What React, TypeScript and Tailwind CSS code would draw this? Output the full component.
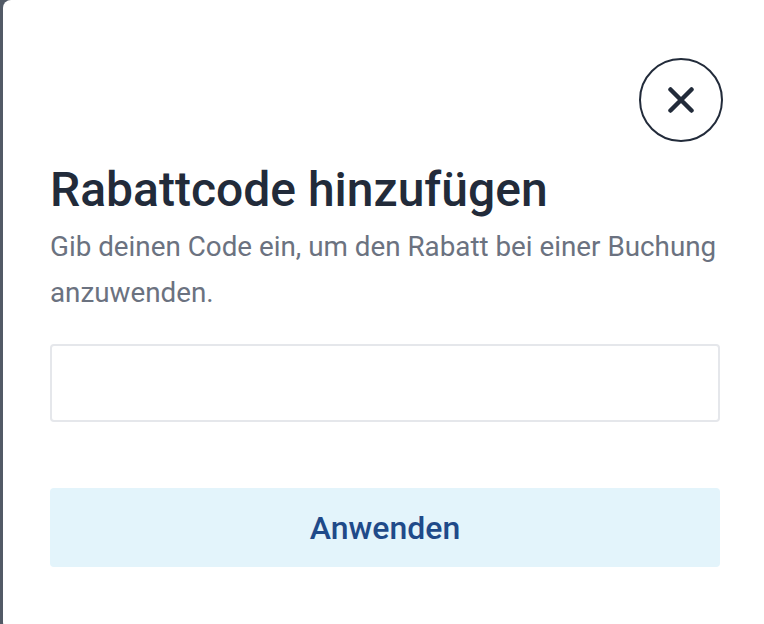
export default function App() {
  return (
    <div
      className="flex h-screen overflow-hidden bg-[#525a66]"
      style={{ fontFamily: "Roboto, 'Noto Sans', sans-serif" }}
    >
      <div className="ml-[3px] flex h-[630px] w-[780px] shrink-0 flex-col rounded-lg bg-white pl-[47px] pr-[63px] pt-[58px]">
        <div className="-mr-[3px] flex justify-end">
          <button
            type="button"
            aria-label="Schließen"
            className="flex h-[84px] w-[84px] items-center justify-center rounded-full border-2 border-[#222b3a] text-[#222b3a]"
          >
            <svg width="26" height="26" viewBox="0 0 26 26" fill="none">
              <path
                d="M2.5 2.5L23.5 23.5M23.5 2.5L2.5 23.5"
                stroke="currentColor"
                strokeWidth="4.5"
                strokeLinecap="round"
              />
            </svg>
          </button>
        </div>
        <h2 className="mt-[22px] text-[48px] font-medium leading-[52px] text-[#222b3a]">
          Rabattcode hinzufügen
        </h2>
        <p className="mt-[8px] -mr-[4px] text-[27.8px] leading-[46px] text-[#6b7280]">
          Gib deinen Code ein, um den Rabatt bei einer Buchung anzuwenden.
        </p>
        <input
          type="text"
          className="mt-[28px] h-[78px] w-full rounded-[4px] border-2 border-[#e5e7eb] px-4 text-[28px] outline-none"
        />
        <button
          type="button"
          className="mt-[66px] h-[79px] w-full rounded-[4px] bg-[#e3f4fb] text-[32px] font-medium text-[#1f4a89]"
        >
          Anwenden
        </button>
      </div>
    </div>
  );
}
